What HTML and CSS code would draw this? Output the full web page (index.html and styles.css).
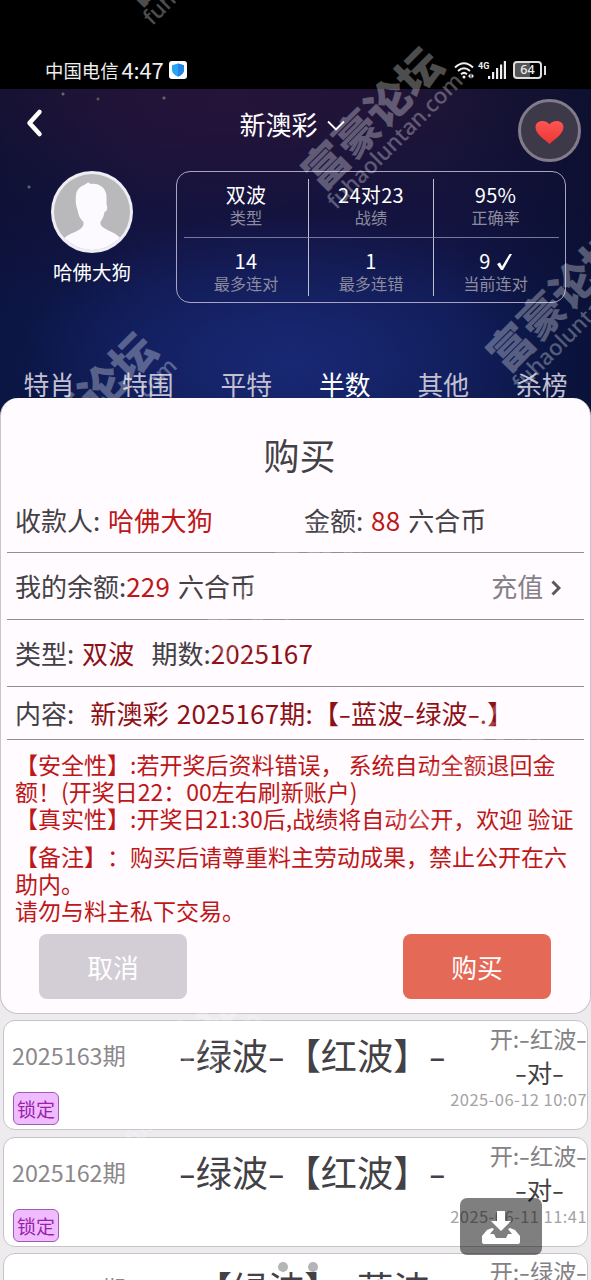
FILE: index.html
```html
<!DOCTYPE html>
<html lang="zh-CN">
<head>
  <meta charset="UTF-8">
  <meta name="viewport" content="width=device-width, initial-scale=1.0">
  <title>购买</title>
  <link rel="stylesheet" href="styles.css">
</head>
<body>
  <div class="status-bar">
    <div class="status-left">
      <span class="carrier">中国电信</span>
      <span class="clock">4:47</span>
      <svg class="shield" viewBox="0 0 18 18">
        <rect width="18" height="18" rx="3" fill="#fff"/>
        <path d="M9 2.500l6 1.700v4.600c0 3.200-2.600 5.400-6 7-3.400-1.600-6-3.800-6-7V4.200z" fill="#2aa5f2"/>
        <path d="M9 2.500l6 1.700v4.600c0 3.200-2.600 5.400-6 7z" fill="#2784e4"/>
      </svg>
    </div>
    <div class="status-right">
      <svg class="wifi" viewBox="0 0 21 18" fill="none" stroke="#eee" stroke-width="2">
        <path d="M1 6.500q9-8.500 18 0M4 10q6-5.500 12 0M7 13.200q3-2.600 6 0"/>
        <circle cx="10" cy="16" r="1.500" fill="#eee" stroke="none"/>
        <path d="M16.500 12.500l-2.500 2.500 2.500 2.500zM17.500 12.500l2.500 2.500-2.500 2.500z" fill="#eee" stroke="none"/>
      </svg>
      <span class="net">4G</span>
      <svg class="signal" viewBox="0 0 18 18" fill="#eee">
        <rect y="15" width="2.200" height="3"/>
        <rect x="4" y="11" width="2.200" height="7"/>
        <rect x="8" y="7" width="2.200" height="11"/>
        <rect x="12" y="3.500" width="2.200" height="14.500"/>
        <rect x="15.800" width="2.200" height="18"/>
      </svg>
      <span class="battery">64</span>
      <span class="battery-tip"></span>
    </div>
  </div>

  <header class="header">
    <div class="nav">
      <svg class="back" viewBox="0 0 18 30" fill="none" stroke="#fff" stroke-width="4.500" stroke-linecap="round" stroke-linejoin="round">
        <path d="M14.500 4L4.500 15l10 11"/>
      </svg>
      <h1 class="nav-title">新澳彩
        <svg class="caret" viewBox="0 0 18 12" fill="none" stroke="#fff" stroke-width="1.800">
          <path d="M1 1.500l8 8 8-8"/>
        </svg>
      </h1>
      <div class="heart">
        <svg viewBox="0 0 32 28">
          <defs>
            <linearGradient id="heartFill" x1="0" y1="0" x2="0" y2="1">
              <stop offset="0" stop-color="#ff5550"/>
              <stop offset="1" stop-color="#ea3636"/>
            </linearGradient>
          </defs>
          <path d="M16 26C13 22.500 1.500 16 1.500 8.500 1.500 1.500 11 0 16 5.500 21 0 30.500 1.500 30.500 8.500 30.500 16 19 22.500 16 26z" fill="url(#heartFill)"/>
        </svg>
      </div>
    </div>

    <div class="profile">
      <div class="user">
        <svg class="avatar" viewBox="0 0 82 82">
          <defs><clipPath id="face"><circle cx="41" cy="41" r="38"/></clipPath></defs>
          <circle cx="41" cy="41" r="41" fill="#efedf4"/>
          <circle cx="41" cy="41" r="38" fill="#b9b8ba"/>
          <g clip-path="url(#face)" fill="#fcfaff">
            <path d="M37 11.500l3 1.500c8-1 15 4 15.500 12 .2 4-.3 8 .5 10 .8 3-.5 6-2.500 6-1 6-3 8-4 10-.5 4 3 6 9 9 6 3 10 5 12 9v14H11V70c3-5 8-7 13-9 6-3 9-5 8.500-10-4-4-5-7-6-12-2-5-2-11-1.500-15 .5-6 5-9 9-10.500z"/>
          </g>
        </svg>
        <div class="user-name">哈佛大狗</div>
      </div>
      <div class="stats">
        <div class="stat"><b>双波</b><span>类型</span></div>
        <div class="stat"><b>24对23</b><span>战绩</span></div>
        <div class="stat"><b>95%</b><span>正确率</span></div>
        <div class="stat"><b>14</b><span>最多连对</span></div>
        <div class="stat"><b>1</b><span>最多连错</span></div>
        <div class="stat">
          <b>9<svg class="tick" viewBox="0 0 16 18"><path d="M1 11l3-1.500 2 4L13.500 1H16L7 17H5z" fill="#fff"/></svg></b>
          <span>当前连对</span>
        </div>
      </div>
    </div>

    <nav class="tabs">
      <span>特肖</span>
      <span>特围</span>
      <span>平特</span>
      <span class="active">半数</span>
      <span>其他</span>
      <span>杀榜</span>
    </nav>
  </header>

  <section class="sheet">
    <h2 class="sheet-title">购买</h2>
    <div class="row row-pay">
      <div class="payee">收款人: <em>哈佛大狗</em></div>
      <div>金额: <em>88</em> 六合币</div>
    </div>
    <div class="row">
      <div>我的余额:<em>229</em> 六合币</div>
      <div class="recharge">充值
        <svg viewBox="0 0 10 16" fill="none" stroke="#5b585d" stroke-width="3"><path d="M1.500 1.500L8 8l-6.500 6.500"/></svg>
      </div>
    </div>
    <div class="row row-type">
      <div>类型: <em class="deep">双波</em></div>
      <div>期数:<em class="deep">2025167</em></div>
    </div>
    <div class="row row-content">
      <div>内容:</div>
      <div class="deep">新澳彩 2025167期:【<i class="dash">-</i>蓝波<i class="dash">-</i>绿波<i class="dash">-</i>.】</div>
    </div>
    <div class="notice">
      <p>【安全性】:若开奖后资料错误， 系统自动全额退回金<br>额！(开奖日22：00左右刷新账户)<br>【真实性】:开奖日21:30后,战绩将自动公开，欢迎 验证</p>
      <p>【备注】：购买后请尊重料主劳动成果，禁止公开在六<br>助内。<br>请勿与料主私下交易。</p>
    </div>
    <div class="actions">
      <button class="btn btn-cancel">取消</button>
      <button class="btn btn-buy">购买</button>
    </div>
  </section>

  <main class="list">
    <article class="card">
      <div class="period">2025163期<span class="lock">锁定</span></div>
      <div class="pick"><i class="dash">-</i>绿波<i class="dash">-</i>【红波】<i class="dash">-</i></div>
      <div class="result">
        <span class="open">开:<i class="dash">-</i>红波<i class="dash">-</i></span>
        <span class="hit"><i class="dash">-</i>对<i class="dash">-</i></span>
        <span class="date">2025-06-12 10:07</span>
      </div>
    </article>
    <article class="card">
      <div class="period">2025162期<span class="lock">锁定</span></div>
      <div class="pick"><i class="dash">-</i>绿波<i class="dash">-</i>【红波】<i class="dash">-</i></div>
      <div class="result">
        <span class="open">开:<i class="dash">-</i>红波<i class="dash">-</i></span>
        <span class="hit"><i class="dash">-</i>对<i class="dash">-</i></span>
        <span class="date">2025-06-11 11:41</span>
      </div>
    </article>
    <article class="card">
      <div class="period">2025161期</div>
      <div class="pick"><i class="dash">-</i>【绿波】<i class="dash">-</i>蓝波<i class="dash">-</i></div>
      <div class="result">
        <span class="open">开:<i class="dash">-</i>绿波<i class="dash">-</i></span>
      </div>
    </article>
  </main>

  <div class="dots"><span></span><span></span></div>
  <div class="download">
    <svg viewBox="0 0 38 34" fill="#fff">
      <path d="M15 0h8v10h6L19 20 9 10h6z"/>
      <path d="M5 19l5-2 2 1-4 5h4l2 4h10l2-4h4l-4-5 2-1 5 2 5 6v6q0 2-2 2H2q-2 0-2-2v-6z"/>
    </svg>
  </div>

  <!-- forum watermark, repeated on a diagonal grid -->
  <div class="watermarks">
    <div class="wm wm-1"><b>富豪论坛</b><span>fuhaoluntan.com</span></div>
    <div class="wm wm-2"><b>富豪论坛</b><span>fuhaoluntan.com</span></div>
    <div class="wm wm-3"><b>富豪论坛</b><span>fuhaoluntan.com</span></div>
    <div class="wm wm-4"><b>富豪论坛</b><span>fuhaoluntan.com</span></div>
    <div class="wm wm-5"><b>富豪论坛</b><span>fuhaoluntan.com</span></div>
    <div class="wm wm-6"><b>富豪论坛</b><span>fuhaoluntan.com</span></div>
    <div class="wm wm-7"><b>富豪论坛</b><span>fuhaoluntan.com</span></div>
  </div>
</body>
</html>
```
FILE: styles.css
```css
:root {
  --sheet-bg: #fffbff;
  --page-bg: #eeebef;
  --text: #434145;
  --red: #bd1718;
  --deep: #8e1014;
  --line: #938d94;
}
* {
  box-sizing: border-box;
}
body {
  margin: 0;
  width: 591px;
  height: 1280px;
  position: relative;
  overflow: hidden;
  background: var(--page-bg);
  color: var(--text);
  font-family: "Noto Sans CJK SC", "Noto Sans", sans-serif;
  text-spacing-trim: space-all;
  white-space: nowrap;
}
em, i { font-style: normal; }
h1, h2, p { margin: 0; font-weight: 400; }

.dash {
  display: inline-block;
  width: 0.46em;
  text-align: center;
  transform: scaleX(1.4);
}

/* Status bar */
.status-bar {
  height: 89px;
  padding: 50px 45px 0;
  background: #000;
  color: #eee;
  display: flex;
  justify-content: space-between;
}
.status-left, .status-right {
  display: flex;
  align-items: center;
  height: 40px;
}
.carrier { font-size: 18.4px; margin-top: -1px; }
.clock {
  margin: -2px 0 0 3px;
  font-size: 22px;
  letter-spacing: -0.2px;
}
.shield { width: 18px; height: 18px; margin-left: 5px; }
.wifi { width: 21px; height: 18px; }
.net {
  margin: -9px 0 0 3px;
  width: 11px;
  font: bold 9px/10px Roboto, sans-serif;
}
.signal { width: 18px; height: 18px; margin-left: -1px; }
.battery {
  width: 29px;
  height: 18px;
  margin-left: 7px;
  border: 2px solid #ddd;
  border-radius: 4px;
  background: linear-gradient(90deg, #555 60%, #000 60%);
  text-align: center;
  font: 500 12.500px/14px "Noto Sans", sans-serif;
}
.battery-tip { width: 2px; height: 9px; margin-left: 2px; background: #ddd; }

/* Header */
.header {
  height: 335px;
  display: flex;
  flex-direction: column;
  color: #fff;
  background:
    radial-gradient(circle at 63px 5px, #666 1px, transparent 2px),
    radial-gradient(circle at 98px 10px, #555 1px, transparent 2px),
    radial-gradient(circle at 164px 9px, #666 1px, transparent 2px),
    radial-gradient(circle at 29px 98px, #567 1px, transparent 2px),
    radial-gradient(ellipse 270px 150px at 290px 275px, rgba(29, 45, 128, 0.75), transparent),
    radial-gradient(ellipse 280px 110px at 230px 10px, rgba(45, 19, 62, 0.6), transparent),
    linear-gradient(90deg, rgba(7, 15, 46, 0.4), transparent 25%, transparent 75%, rgba(7, 14, 45, 0.65)),
    linear-gradient(#1b1433, #14133f 38%, #0e1a52 70%, #0d1a50);
}
.nav {
  position: relative;
  height: 82px;
  display: flex;
  justify-content: center;
}
.back {
  position: absolute;
  left: 25px;
  top: 19px;
  width: 18px;
  height: 30px;
}
.nav-title {
  font-size: 26px;
  line-height: 70px;
  margin-left: -6px;
}
.caret { width: 18px; height: 12px; margin-left: 4px; vertical-align: 3px; }
.heart {
  position: absolute;
  top: 10px;
  left: 518px;
  width: 63px;
  height: 63px;
  border: 3px solid #817b8b;
  border-radius: 50%;
  background: #3d3948;
  display: flex;
  align-items: center;
  justify-content: center;
}
.heart svg { width: 31px; height: 27px; margin-top: 3px; }

.profile {
  display: flex;
  height: 132px;
}
.user {
  width: 176px;
  padding-left: 8px;
  display: flex;
  flex-direction: column;
  align-items: center;
}
.avatar { width: 82px; height: 82px; flex: none; }
.user-name { font-size: 19.500px; line-height: 38px; }
.stats {
  width: 390px;
  border: 1px solid #a7a5c3;
  border-radius: 14px;
  padding: 7px;
  display: grid;
  grid-template-columns: 125px 125px 125px;
  grid-template-rows: 59px 58px;
}
.stat {
  display: flex;
  flex-direction: column;
  align-items: center;
  padding-top: 4px;
  border-right: 1px solid #bfbdd2;
}
.stat:nth-child(3n) { border-right: 0; padding-right: 2px; }
.stat:nth-child(-n+3) { border-bottom: 1px solid #77779b; }
.stat:nth-child(n+4) { padding-top: 11px; }
.stat b { font-size: 20px; font-weight: 400; line-height: 23px; letter-spacing: 0.3px; }
.stat span { font-size: 16.200px; line-height: 23px; color: #8d8b9f; }
.tick { width: 16px; height: 18px; margin-left: 5px; vertical-align: -2px; }
.tabs {
  display: flex;
  margin-top: 57px;
}
.tabs span {
  flex: 1;
  text-align: center;
  font-size: 25.800px;
  line-height: 48px;
  color: #c2c0d1;
}
.tabs .active { color: #fff; }

/* Purchase sheet */
.sheet {
  position: relative;
  margin-top: -26px;
  height: 616px;
  padding: 0 6px;
  border: 1px solid #c9c4ca;
  border-top: 0;
  border-radius: 18px;
  background: var(--sheet-bg);
}
.sheet-title {
  height: 90px;
  line-height: 112px;
  text-align: center;
  font-size: 36px;
  padding-left: 8px;
}
.row {
  height: 67px;
  padding: 0 8px 1px;
  border-bottom: 1px solid var(--line);
  display: flex;
  align-items: center;
  font-size: 26px;
  word-spacing: 2px;
}
.row em { color: var(--red); letter-spacing: 0.2px; }
.row .deep { color: var(--deep); letter-spacing: 0.2px; }
.row-pay { height: 65px; padding-bottom: 2px; }
.payee { width: 289px; }
.recharge {
  margin-left: auto;
  margin-right: 15px;
  color: #858087;
}
.recharge svg { width: 10px; height: 16px; vertical-align: 1px; }
.row-type { gap: 17px; }
.row-content { height: 53px; gap: 16px; padding-bottom: 1px; }

.notice {
  padding: 11px 8px 0;
  color: var(--red);
  font-size: 23px;
  line-height: 26.800px;
}
.notice p + p { margin-top: 12px; }
.actions {
  display: flex;
  justify-content: space-between;
  padding: 10px 33px 0 32px;
}
.btn {
  width: 148px;
  height: 65px;
  padding: 0;
  border: none;
  border-radius: 8px;
  color: #fff;
  font-family: inherit;
  font-size: 25.800px;
}
.btn-cancel { background: #d3cdd5; }
.btn-buy { background: #e46956; }

/* Records */
.list {
  height: 266px;
  overflow: hidden;
  padding: 6px 3px 0;
  display: flex;
  flex-direction: column;
  gap: 6.500px;
}
.card {
  height: 110px;
  flex: none;
  border: 1px solid #c8c3c9;
  border-radius: 12px;
  background: #fff;
  display: flex;
}
.period {
  width: 175px;
  padding: 17px 0 0 8px;
  display: flex;
  flex-direction: column;
  align-items: flex-start;
  font-size: 23.300px;
  line-height: 34px;
  color: #8b888c;
}
.lock {
  margin: 20px 0 0 1px;
  width: 46px;
  height: 33px;
  border: 1px solid #a35bb0;
  border-radius: 6px;
  background: #efbcff;
  color: #9c1fac;
  font-size: 19px;
  line-height: 32px;
  text-align: center;
}
.pick {
  width: 270px;
  font-size: 36.200px;
  line-height: 67px;
}
.result {
  flex: 1;
  display: flex;
  flex-direction: column;
  align-items: flex-end;
}
.open { font-size: 23.200px; line-height: 34px; color: #858286; }
.hit { font-size: 25.500px; line-height: 33px; margin-right: 23px; }
.date { font-size: 16.500px; line-height: 22px; letter-spacing: 0.45px; color: #a5a2a6; }

/* Floating pieces */
.dots {
  position: absolute;
  left: 278px;
  top: 1262px;
  display: flex;
  gap: 20px;
}
.dots span { width: 10px; height: 10px; border-radius: 50%; background: #b5b4b6; }
.download {
  position: absolute;
  left: 460px;
  top: 1198px;
  width: 82px;
  height: 57px;
  border-radius: 7px;
  background: rgba(0, 0, 0, 0.5);
  display: flex;
  align-items: center;
  justify-content: center;
}
.download svg { width: 38px; height: 34px; margin-top: 2px; }

.watermarks {
  position: absolute;
  inset: 0;
  overflow: hidden;
  pointer-events: none;
}
.wm {
  position: absolute;
  width: 190px;
  height: 70px;
  margin: -35px 0 0 -95px;
  color: #fff;
  opacity: 0.3;
  text-align: center;
  transform: rotate(-45deg);
}
.wm b { display: block; font-size: 44px; line-height: 46px; font-weight: 900; }
.wm span { display: block; font: 500 22px/20px "Noto Sans", sans-serif; }
.wm-1 { left: 379px; top: 125px; }
.wm-2 { left: 195px; top: -59px; }
.wm-3 { left: 93px; top: 410px; }
.wm-4 { left: 564px; top: 307px; }
.wm-5 { left: 278px; top: 593px; opacity: 0.2; }
.wm-6 { left: 463px; top: 777px; opacity: 0.2; }
.wm-7 { left: 177px; top: 1063px; opacity: 0.2; }
```
